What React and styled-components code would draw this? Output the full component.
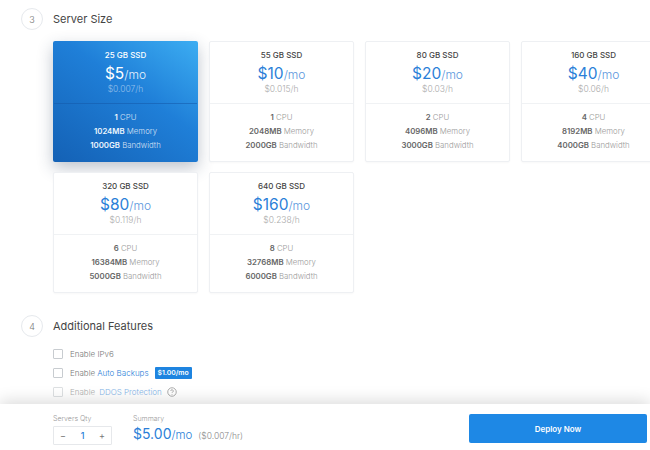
import React from 'react'
import styled, { createGlobalStyle } from 'styled-components'

const GlobalStyle = createGlobalStyle`
    html, body { margin: 0; padding: 0; background: #fff; }
    body { font-family: "Inter", "Open Sans", sans-serif; color: #444; }
`;

const Page = styled.div`
    width: 650px;
    height: 450px;
    display: flex;
    flex-direction: column;
    overflow: hidden;
`;

const Content = styled.div`
    flex: 1;
    min-height: 0;
    padding: 8px 0 0 21px;
    overflow: hidden;
`;

const StepRow = styled.div`
    display: flex;
    align-items: center;
    gap: 10px;
    height: 22px;
`;

const StepCircle = styled.div`
    width: 20px;
    height: 20px;
    flex: none;
    border: 1px solid #e6e9ed;
    border-radius: 50%;
    display: flex;
    align-items: center;
    justify-content: center;
    font-size: 9px;
    font-weight: 300;
    color: #777;
`;

const StepTitle = styled.h2`
    margin: 0;
    font-size: 11px;
    font-weight: 400;
    color: #444;
`;

const Grid = styled.div`
    display: grid;
    grid-template-columns: repeat(4, 145px);
    grid-auto-rows: 121px;
    gap: 10px 11px;
    margin: 11px 0 0 32px;
    width: 620px;
`;

const Card = styled.div`
    box-sizing: border-box;
    display: flex;
    flex-direction: column;
    border-radius: 2px;
    text-align: center;
    border: 1px solid ${p => (p.$active ? 'transparent' : '#eef0f3')};
    background: ${p => (p.$active ? 'linear-gradient(215deg, #3cadf2 0%, #1f7fd8 42%, #1461b5 100%)' : '#fff')};
    background-origin: border-box;
    box-shadow: ${p => (p.$active ? '0 6px 16px rgba(40, 60, 90, 0.3)' : '0 1px 2px rgba(0, 0, 0, 0.03)')};
    color: ${p => (p.$active ? '#fff' : '#444')};
`;

const CardTop = styled.div`
    height: 62px;
    flex: none;
    padding-top: 8px;
    box-sizing: border-box;
    border-bottom: 1px solid ${p => (p.$active ? 'rgba(20, 90, 170, 0.55)' : '#f0f2f4')};
`;

const Disk = styled.div`
    font-size: 8px;
    font-weight: 500;
    line-height: 11px;
`;

const Price = styled.div`
    margin-top: 3px;
    font-size: 15.5px;
    line-height: 19px;
    font-weight: 400;
    color: ${p => (p.$active ? '#fff' : '#2b7fd8')};
    span {
        font-size: 12px;
        font-weight: 300;
        color: ${p => (p.$active ? '#e4f1fc' : '#5b97dd')};
    }
`;

const Hourly = styled.div`
    font-size: 8.5px;
    line-height: 10px;
    font-weight: 300;
    color: ${p => (p.$active ? 'rgba(255, 255, 255, 0.5)' : '#aaa')};
`;

const Specs = styled.ul`
    list-style: none;
    margin: 0;
    padding: 6px 0 0;
`;

const Spec = styled.li`
    font-size: 7.8px;
    line-height: 14px;
    font-weight: 300;
    color: ${p => (p.$active ? 'rgba(255, 255, 255, 0.82)' : '#999')};
    b {
        font-weight: 600;
        color: ${p => (p.$active ? '#eef6fd' : '#666')};
    }
`;

const Section = styled.div`
    margin-top: 22px;
`;

const Features = styled.div`
    margin: 11px 0 0 32px;
    display: flex;
    flex-direction: column;
    gap: 8px;
`;

const Feature = styled.label`
    display: flex;
    align-items: center;
    height: 11px;
    font-size: 8px;
    font-weight: 300;
    color: #777;
    opacity: ${p => (p.$disabled ? 0.6 : 1)};
`;

const Check = styled.span`
    width: 8px;
    height: 8px;
    flex: none;
    margin-right: 7px;
    border: 1px solid #c8ccd0;
    border-radius: 1px;
`;

const Link = styled.span`
    color: #2b7fd8;
    margin-left: ${p => p.$gap || 2}px;
`;

const Badge = styled.span`
    margin-left: 6px;
    padding: 0 3px;
    height: 12px;
    line-height: 12px;
    background: #1e84e0;
    color: #fff;
    border-radius: 1px;
    font-size: 6.8px;
    font-weight: 600;
`;

const Help = styled.svg`
    margin-left: 5px;
    width: 10px;
    height: 10px;
`;

const Footer = styled.footer`
    position: relative;
    box-sizing: border-box;
    height: 46px;
    flex: none;
    background: #fff;
    box-shadow: 0 -4px 14px rgba(0, 0, 0, 0.13);
    display: flex;
    align-items: flex-start;
    padding: 10px 3px 0 53px;
`;

const Qty = styled.div`
    width: 59px;
    flex: none;
    margin-right: 21px;
`;

const SmallLabel = styled.div`
    font-size: 7px;
    line-height: 10px;
    font-weight: 300;
    color: #999;
`;

const Stepper = styled.div`
    box-sizing: border-box;
    margin-top: 2px;
    height: 19px;
    padding: 0 6px;
    border: 1px solid #e6e8eb;
    border-radius: 1px;
    display: flex;
    align-items: center;
    justify-content: space-between;
    font-size: 9px;
    color: #777;
    b {
        color: #2b7fd8;
        font-weight: 500;
    }
`;

const Summary = styled.div`
    flex: 1;
`;

const Total = styled.div`
    font-size: 14px;
    line-height: 20px;
    font-weight: 400;
    color: #2b7fd8;
    .mo {
        font-size: 11.5px;
        font-weight: 300;
    }
    .hr {
        margin-left: 6px;
        font-size: 8.5px;
        font-weight: 300;
        color: #888;
    }
`;

const Deploy = styled.button`
    width: 178px;
    height: 29px;
    border: 0;
    border-radius: 2px;
    background: #1e88e5;
    color: #fff;
    font-family: inherit;
    font-size: 8px;
    font-weight: 600;
`;

const plans = [
    { disk: '25 GB SSD', price: '$5', hour: '$0.007/h', cpu: 1, mem: '1024MB', band: '1000GB', active: true },
    { disk: '55 GB SSD', price: '$10', hour: '$0.015/h', cpu: 1, mem: '2048MB', band: '2000GB' },
    { disk: '80 GB SSD', price: '$20', hour: '$0.03/h', cpu: 2, mem: '4096MB', band: '3000GB' },
    { disk: '160 GB SSD', price: '$40', hour: '$0.06/h', cpu: 4, mem: '8192MB', band: '4000GB' },
    { disk: '320 GB SSD', price: '$80', hour: '$0.119/h', cpu: 6, mem: '16384MB', band: '5000GB' },
    { disk: '640 GB SSD', price: '$160', hour: '$0.238/h', cpu: 8, mem: '32768MB', band: '6000GB' },
];

export default function App() {
    return (
        <Page>
            <GlobalStyle />
            <Content>
                <StepRow>
                    <StepCircle>3</StepCircle>
                    <StepTitle>Server Size</StepTitle>
                </StepRow>
                <Grid>
                    {plans.map(plan => (
                        <Card key={plan.disk} $active={plan.active}>
                            <CardTop $active={plan.active}>
                                <Disk>{plan.disk}</Disk>
                                <Price $active={plan.active}>{plan.price}<span>/mo</span></Price>
                                <Hourly $active={plan.active}>{plan.hour}</Hourly>
                            </CardTop>
                            <Specs>
                                <Spec $active={plan.active}><b>{plan.cpu}</b> CPU</Spec>
                                <Spec $active={plan.active}><b>{plan.mem}</b> Memory</Spec>
                                <Spec $active={plan.active}><b>{plan.band}</b> Bandwidth</Spec>
                            </Specs>
                        </Card>
                    ))}
                </Grid>
                <Section>
                    <StepRow>
                        <StepCircle>4</StepCircle>
                        <StepTitle>Additional Features</StepTitle>
                    </StepRow>
                    <Features>
                        <Feature><Check />Enable IPv6</Feature>
                        <Feature><Check />Enable<Link>Auto Backups</Link><Badge>$1.00/mo</Badge></Feature>
                        <Feature $disabled>
                            <Check />Enable<Link $gap={4}>DDOS Protection</Link>
                            <Help viewBox="0 0 20 20" fill="none" stroke="#555" strokeWidth="1.6">
                                <circle cx="10" cy="10" r="8.5" />
                                <path d="M7.5 8a2.5 2.5 0 1 1 3.7 2.2c-.8.5-1.2 1-1.2 1.8" />
                                <path d="M10 14v1.4" />
                            </Help>
                        </Feature>
                    </Features>
                </Section>
            </Content>
            <Footer>
                <Qty>
                    <SmallLabel>Servers Qty</SmallLabel>
                    <Stepper><span>−</span><b>1</b><span>+</span></Stepper>
                </Qty>
                <Summary>
                    <SmallLabel>Summary</SmallLabel>
                    <Total>$5.00<span className="mo">/mo</span><span className="hr">($0.007/hr)</span></Total>
                </Summary>
                <Deploy>Deploy Now</Deploy>
            </Footer>
        </Page>
    )
}
